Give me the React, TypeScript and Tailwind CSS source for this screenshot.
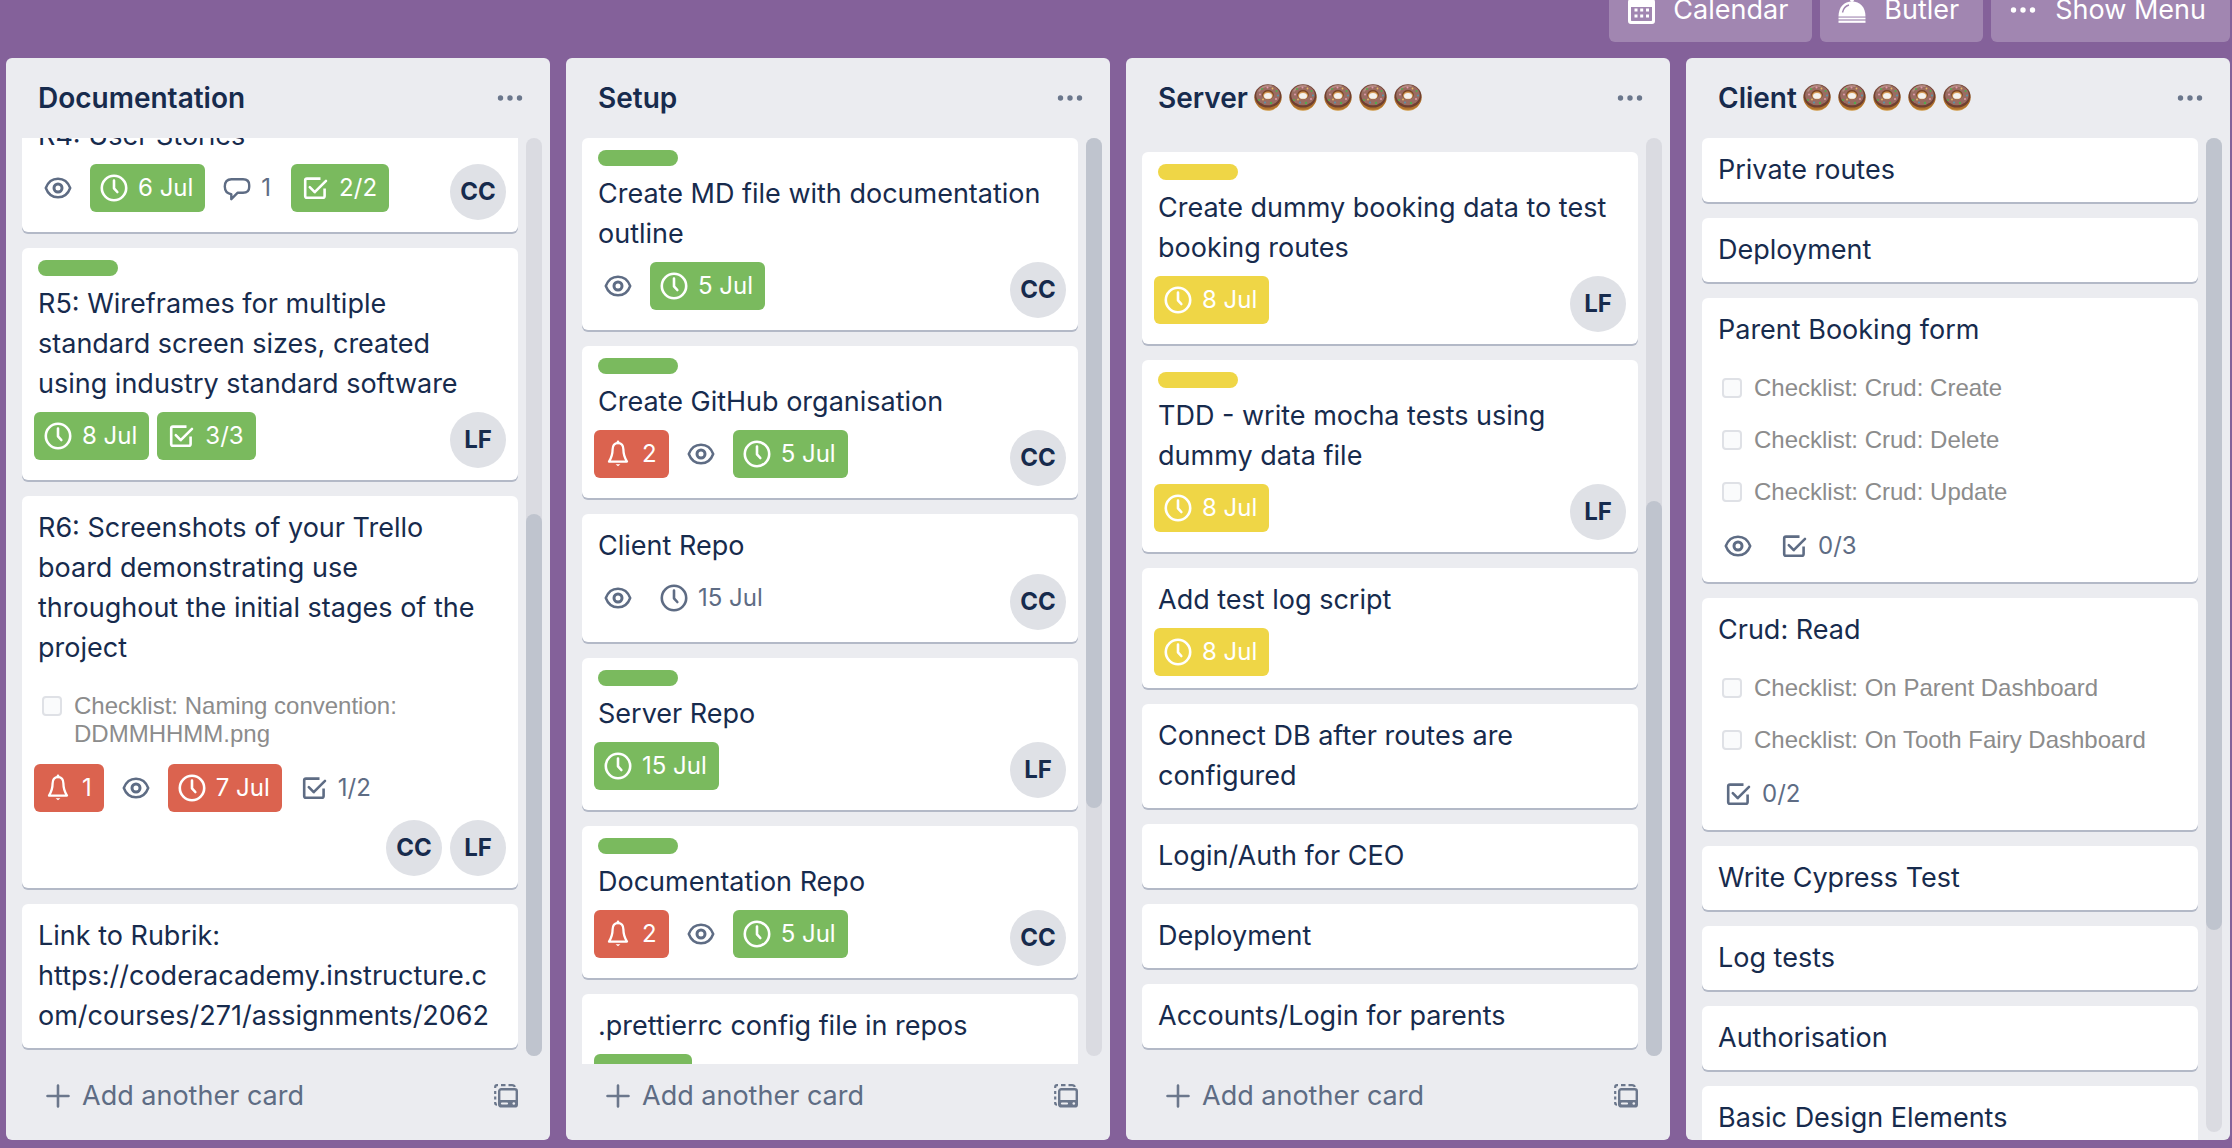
import type { ReactNode } from "react";

type Tone = "plain" | "green" | "red" | "yellow";
type BadgeKind = "bell" | "eye" | "clock" | "comment" | "check";
type BadgeData = { kind: BadgeKind; text?: string; tone?: Tone };
type CardData = {
  title: string;
  label?: "green" | "yellow";
  checklist?: string[];
  badges?: BadgeData[];
  members?: string[];
  stacked?: boolean;
  breakAll?: boolean;
};

const tones: Record<Tone, string> = {
  plain: "text-[#5e6c84]",
  green: "bg-[#7aba5e] text-white",
  red: "bg-[#db634f] text-white",
  yellow: "bg-[#efd646] text-white",
};

function Icon({ kind }: { kind: BadgeKind }) {
  return (
    <svg
      viewBox="0 0 40 40"
      className="size-10 shrink-0"
      fill="none"
      stroke="currentColor"
      strokeWidth="2.6"
      strokeLinecap="round"
      strokeLinejoin="round"
      aria-hidden="true"
    >
      {kind === "eye" && (
        <>
          <path d="M7.8 20C10 14 14.500 10.700 20 10.700S30 14 32.200 20C30 26 25.500 29.300 20 29.300S10 26 7.800 20Z" strokeWidth="2.5" />
          <circle cx="20" cy="20" r="4" strokeWidth="3" />
        </>
      )}
      {kind === "clock" && (
        <>
          <circle cx="20" cy="20" r="12.200" />
          <path d="M20 12.500V20.300L23.300 24" />
        </>
      )}
      {kind === "comment" && (
        <path d="M14.500 11.200H26C30 11.200 32.200 13.500 32.200 17V19C32.200 23 30 24.800 26 24.800H20.500L14.300 31.200V26.200C10 25.500 7.800 23 7.800 18.500C7.800 14 10 11.200 14.500 11.200Z" strokeWidth="2.400" />
      )}
      {kind === "check" && (
        <>
          <path d="M25.500 10.600H12C11 10.600 10.200 11.300 10.200 12.300V28C10.200 29 11 29.800 12 29.800H27.800C28.800 29.800 29.600 29 29.600 28V20.500" strokeLinecap="butt" />
          <path d="M14.800 19.200L19.700 24.200L31 12.800" />
        </>
      )}
      {kind === "bell" && (
        <>
          <path d="M20 8.800C16 9.200 14.600 12 14.600 15.500C14.600 21.500 13.600 23.500 11 27.600H29C26.400 23.500 25.400 21.500 25.400 15.500C25.400 12 24 9.200 20 8.800Z" strokeWidth="2.300" />
          <path d="M20 7.800V9" />
          <path d="M17.600 30.300H22.400L20 32.300Z" fill="currentColor" stroke="none" />
        </>
      )}
    </svg>
  );
}

function Badge({ kind, text, tone = "plain" }: BadgeData) {
  return (
    <span className={`flex h-12 items-center rounded-md p-1 ${tones[tone]}`}>
      <Icon kind={kind} />
      {text && <span className="pr-2 pl-1 text-[24px] leading-10">{text}</span>}
    </span>
  );
}

function Members({ names }: { names: string[] }) {
  return (
    <div className="flex shrink-0 gap-2">
      {names.map((n) => (
        <span
          key={n}
          className="flex size-14 items-center justify-center rounded-full bg-[#dfe1e6] text-[24px] font-bold text-[#172b4d]"
        >
          {n}
        </span>
      ))}
    </div>
  );
}

function Card({ card }: { card: CardData }) {
  const hasFooter = card.badges || card.members;
  return (
    <article className="shrink-0 rounded-md bg-white pt-3 pr-3 pb-3 pl-4 shadow-[0_2px_0_#b3b9c7]">
      {card.label && (
        <div
          className={`mb-2 h-4 w-20 rounded-full ${card.label === "green" ? "bg-[#7aba5e]" : "bg-[#efd646]"}`}
        />
      )}
      <h3 className={`pr-1 text-[27px] leading-10 text-[#172b4d] ${card.breakAll ? "whitespace-pre-line break-all" : ""}`}>
        {card.title}
      </h3>
      {card.checklist && (
        <ul className="mt-3 -mb-1">
          {card.checklist.map((item) => (
            <li key={item} className="py-3">
              <label className="flex gap-3 pl-1 font-['Liberation_Sans',sans-serif] text-[24px] leading-7 text-[#8c8c8c]">
                <input
                  type="checkbox"
                  className="mt-1 size-5 shrink-0 appearance-none rounded-[4px] border-2 border-[#dfe1e6] bg-[#fafbfc]"
                />
                <span>{item}</span>
              </label>
            </li>
          ))}
        </ul>
      )}
      {hasFooter && (
        <div className={`mt-2 -ml-1 flex justify-between ${card.stacked ? "flex-col gap-2" : ""}`}>
          <div className="flex gap-2">
            {card.badges?.map((b) => (
              <Badge key={b.kind} {...b} />
            ))}
          </div>
          {card.members && (
            <div className="flex justify-end">
              <Members names={card.members} />
            </div>
          )}
        </div>
      )}
    </article>
  );
}

function Dots() {
  return (
    <svg viewBox="0 0 40 40" className="size-10 shrink-0" fill="currentColor" aria-hidden="true">
      <circle cx="10.500" cy="20" r="2.700" />
      <circle cx="20" cy="20" r="2.700" />
      <circle cx="29.500" cy="20" r="2.700" />
    </svg>
  );
}

function Donut() {
  return (
    <svg viewBox="0 0 28 28" className="size-7 -translate-y-px" role="img" aria-label="doughnut">
      <ellipse cx="14" cy="15.800" rx="12.800" ry="12" fill="#d09a48" />
      <ellipse cx="14" cy="14.600" rx="13.700" ry="12.200" fill="#b0722f" />
      <ellipse cx="14" cy="12.900" rx="13.400" ry="11.700" fill="#6f4030" />
      <ellipse cx="14" cy="12" rx="11.800" ry="10.300" fill="#9a6c62" />
      <path d="M5 8C8 3.500 13 2.500 17 3.200" fill="none" stroke="#b58d84" strokeWidth="1.500" strokeLinecap="round" />
      <ellipse cx="14" cy="11.800" rx="5.800" ry="4.700" fill="#7a4524" />
      <ellipse cx="14" cy="12.500" rx="5" ry="3.900" fill="#d39a58" />
      <ellipse cx="14" cy="12.900" rx="4" ry="2.900" fill="#f4f1ee" />
      <g fill="#4fae4c">
        <circle cx="8" cy="6" r="1" />
        <circle cx="22.500" cy="8" r="1" />
        <circle cx="17" cy="20" r="1.200" />
        <circle cx="5" cy="17" r="1" />
      </g>
      <g fill="#e09aab">
        <circle cx="13.500" cy="4.500" r="1" />
        <circle cx="6" cy="11.500" r="1" />
        <circle cx="22" cy="16" r="1" />
      </g>
      <g fill="#4b9bb5">
        <circle cx="24" cy="12.500" r="0.900" />
        <circle cx="11" cy="19.500" r="0.900" />
      </g>
      <g fill="#e6bd62">
        <circle cx="18.500" cy="5.500" r="0.900" />
        <circle cx="9" cy="16.500" r="0.900" />
      </g>
    </svg>
  );
}

function TemplateIcon() {
  return (
    <svg viewBox="0 0 24 24" className="size-6" fill="none" stroke="currentColor" aria-hidden="true">
      <path d="M1.200 4V3C1.200 2 2 1.200 3 1.200H4M7 1.200H11.500M14.500 1.200H18C19.500 1.200 20.500 1.800 20.800 3M1.200 7V10M1.200 12.500V15.500M1.200 18V19C1.200 20 2 20.600 3 20.600" strokeWidth="2.200" />
      <rect x="5.200" y="5.200" width="17.600" height="17.200" rx="2" strokeWidth="2.400" />
      <path d="M5 16H23V21C23 22 22.400 22.600 21.500 22.600H6.500C5.600 22.600 5 22 5 21Z" fill="currentColor" stroke="none" />
      <path d="M8 19.500H13" stroke="#ebecf0" strokeWidth="2.200" strokeLinecap="round" />
      <circle cx="19.800" cy="19.500" r="1.300" fill="#ebecf0" stroke="none" />
    </svg>
  );
}

type ListProps = {
  title: string;
  donuts?: boolean;
  cards: CardData[];
  scroll: string;
  thumb: string;
  footer?: boolean;
};

function List({ title, donuts, cards, scroll, thumb, footer = true }: ListProps) {
  return (
    <section className="flex min-w-0 flex-1 flex-col overflow-hidden rounded-md bg-[#ebecf0]">
      <header className="flex h-20 shrink-0 items-center justify-between pr-5 pl-8">
        <h2 className="flex items-center gap-1.5 text-[28px] leading-10 font-semibold text-[#172b4d]">
          {title}
          {donuts && (
            <span className="flex gap-[7px]">
              {[0, 1, 2, 3, 4].map((i) => (
                <Donut key={i} />
              ))}
            </span>
          )}
        </h2>
        <button type="button" aria-label="List actions" className="text-[#6b778c]">
          <Dots />
        </button>
      </header>
      <div className="flex min-h-0 flex-1 gap-2 pr-2 pl-4">
        <div className={`flex min-w-0 flex-1 flex-col gap-4 overflow-hidden ${scroll}`}>
          {cards.map((c) => (
            <Card key={c.title} card={c} />
          ))}
        </div>
        <div className="mb-2 w-4 shrink-0 rounded-full bg-[#dadbe1]">
          <div className={`w-4 rounded-full bg-[#bfc4ce] ${thumb}`} />
        </div>
      </div>
      {footer && (
        <footer className="mb-3 flex h-16 shrink-0 items-center justify-between pr-8 pl-8 text-[#5e6c84]">
          <button type="button" className="flex items-center gap-1 text-[27px] leading-10">
            <svg viewBox="0 0 40 40" className="size-10" stroke="#6b778c" strokeWidth="2.600" strokeLinecap="round" aria-hidden="true">
              <path d="M9.500 20H30.500M20 9.500V30.500" />
            </svg>
            Add another card
          </button>
          <button type="button" aria-label="Create from template" className="text-[#6b778c]">
            <TemplateIcon />
          </button>
        </footer>
      )}
    </section>
  );
}

function BarButton({ icon, children }: { icon: ReactNode; children: ReactNode }) {
  return (
    <button
      type="button"
      className="flex h-16 items-center gap-3 rounded-md bg-[#a186b1] pr-6 pl-3 text-[27px] leading-10 text-white"
    >
      {icon}
      {children}
    </button>
  );
}

function CalendarIcon() {
  return (
    <svg viewBox="0 0 40 40" className="size-10" fill="currentColor" aria-hidden="true">
      <path
        fillRule="evenodd"
        d="M10 9H31C33 9 34 10 34 12V31C34 33 33 34 31 34H10C8 34 7 33 7 31V12C7 10 8 9 10 9ZM10 17V30C10 30.700 10.300 31 11 31H30C30.700 31 31 30.700 31 30V17Z"
      />
      <path d="M13.500 18.500h3v3h-3zM19.200 18.500h3v3h-3zM25 18.500h3v3h-3zM13.500 24.500h3v3h-3zM19.200 24.500h3v3h-3zM25 24.500h3v3h-3z" />
    </svg>
  );
}

function ButlerIcon() {
  return (
    <svg viewBox="0 0 40 40" className="size-10" fill="currentColor" aria-hidden="true">
      <circle cx="20" cy="10" r="2" />
      <path d="M6.500 26.500C6.500 17 12 11.500 20 11.500S33.500 17 33.500 26.500Z" />
      <path d="M10.500 22.500C11.300 18.500 13.500 16 17 15" fill="none" stroke="#a186b1" strokeWidth="1.400" />
      <rect x="6.500" y="27.600" width="27" height="1.800" />
      <rect x="6.500" y="30.600" width="27" height="2.200" />
    </svg>
  );
}

const documentation: CardData[] = [
  {
    title: "R4: User Stories",
    badges: [
      { kind: "eye" },
      { kind: "clock", text: "6 Jul", tone: "green" },
      { kind: "comment", text: "1" },
      { kind: "check", text: "2/2", tone: "green" },
    ],
    members: ["CC"],
  },
  {
    title: "R5: Wireframes for multiple standard screen sizes, created using industry standard software",
    label: "green",
    badges: [
      { kind: "clock", text: "8 Jul", tone: "green" },
      { kind: "check", text: "3/3", tone: "green" },
    ],
    members: ["LF"],
  },
  {
    title: "R6: Screenshots of your Trello board demonstrating use throughout the initial stages of the project",
    checklist: ["Checklist: Naming convention: DDMMHHMM.png"],
    badges: [
      { kind: "bell", text: "1", tone: "red" },
      { kind: "eye" },
      { kind: "clock", text: "7 Jul", tone: "red" },
      { kind: "check", text: "1/2" },
    ],
    members: ["CC", "LF"],
    stacked: true,
  },
  {
    title: "Link to Rubrik:\nhttps://coderacademy.instructure.com/courses/271/assignments/2062",
    breakAll: true,
  },
];

const setup: CardData[] = [
  {
    title: "Create MD file with documentation outline",
    label: "green",
    badges: [{ kind: "eye" }, { kind: "clock", text: "5 Jul", tone: "green" }],
    members: ["CC"],
  },
  {
    title: "Create GitHub organisation",
    label: "green",
    badges: [
      { kind: "bell", text: "2", tone: "red" },
      { kind: "eye" },
      { kind: "clock", text: "5 Jul", tone: "green" },
    ],
    members: ["CC"],
  },
  {
    title: "Client Repo",
    badges: [{ kind: "eye" }, { kind: "clock", text: "15 Jul" }],
    members: ["CC"],
  },
  {
    title: "Server Repo",
    label: "green",
    badges: [{ kind: "clock", text: "15 Jul", tone: "green" }],
    members: ["LF"],
  },
  {
    title: "Documentation Repo",
    label: "green",
    badges: [
      { kind: "bell", text: "2", tone: "red" },
      { kind: "eye" },
      { kind: "clock", text: "5 Jul", tone: "green" },
    ],
    members: ["CC"],
  },
  {
    title: ".prettierrc config file in repos",
    badges: [{ kind: "check", text: "2/2", tone: "green" }],
  },
];

const server: CardData[] = [
  {
    title: "Create dummy booking data to test booking routes",
    label: "yellow",
    badges: [{ kind: "clock", text: "8 Jul", tone: "yellow" }],
    members: ["LF"],
  },
  {
    title: "TDD - write mocha tests using dummy data file",
    label: "yellow",
    badges: [{ kind: "clock", text: "8 Jul", tone: "yellow" }],
    members: ["LF"],
  },
  {
    title: "Add test log script",
    badges: [{ kind: "clock", text: "8 Jul", tone: "yellow" }],
  },
  { title: "Connect DB after routes are configured" },
  { title: "Login/Auth for CEO" },
  { title: "Deployment" },
  { title: "Accounts/Login for parents" },
];

const client: CardData[] = [
  { title: "Private routes" },
  { title: "Deployment" },
  {
    title: "Parent Booking form",
    checklist: ["Checklist: Crud: Create", "Checklist: Crud: Delete", "Checklist: Crud: Update"],
    badges: [{ kind: "eye" }, { kind: "check", text: "0/3" }],
  },
  {
    title: "Crud: Read",
    checklist: ["Checklist: On Parent Dashboard", "Checklist: On Tooth Fairy Dashboard"],
    badges: [{ kind: "check", text: "0/2" }],
  },
  { title: "Write Cypress Test" },
  { title: "Log tests" },
  { title: "Authorisation" },
  { title: "Basic Design Elements" },
];

export default function App() {
  return (
    <div className="flex h-screen flex-col gap-4 overflow-hidden bg-[#84619a] pb-2 font-['Inter',sans-serif]">
      <nav className="flex h-[42px] shrink-0 items-end justify-end gap-2 overflow-hidden pr-[2px]">
        <BarButton icon={<CalendarIcon />}>Calendar</BarButton>
        <BarButton icon={<ButlerIcon />}>Butler</BarButton>
        <BarButton icon={<Dots />}>Show Menu</BarButton>
      </nav>
      <main className="flex min-h-0 flex-1 gap-4 pr-[2px] pl-[6px]">
        <List title="Documentation" cards={documentation} scroll="justify-end pb-4" thumb="mt-[376px] h-[542px]" />
        <List title="Setup" cards={setup} scroll="" thumb="h-[670px]" />
        <List title="Server" donuts cards={server} scroll="justify-end pb-4" thumb="mt-[363px] h-[555px]" />
        <List title="Client" donuts cards={client} scroll="" thumb="h-[792px]" footer={false} />
      </main>
    </div>
  );
}
